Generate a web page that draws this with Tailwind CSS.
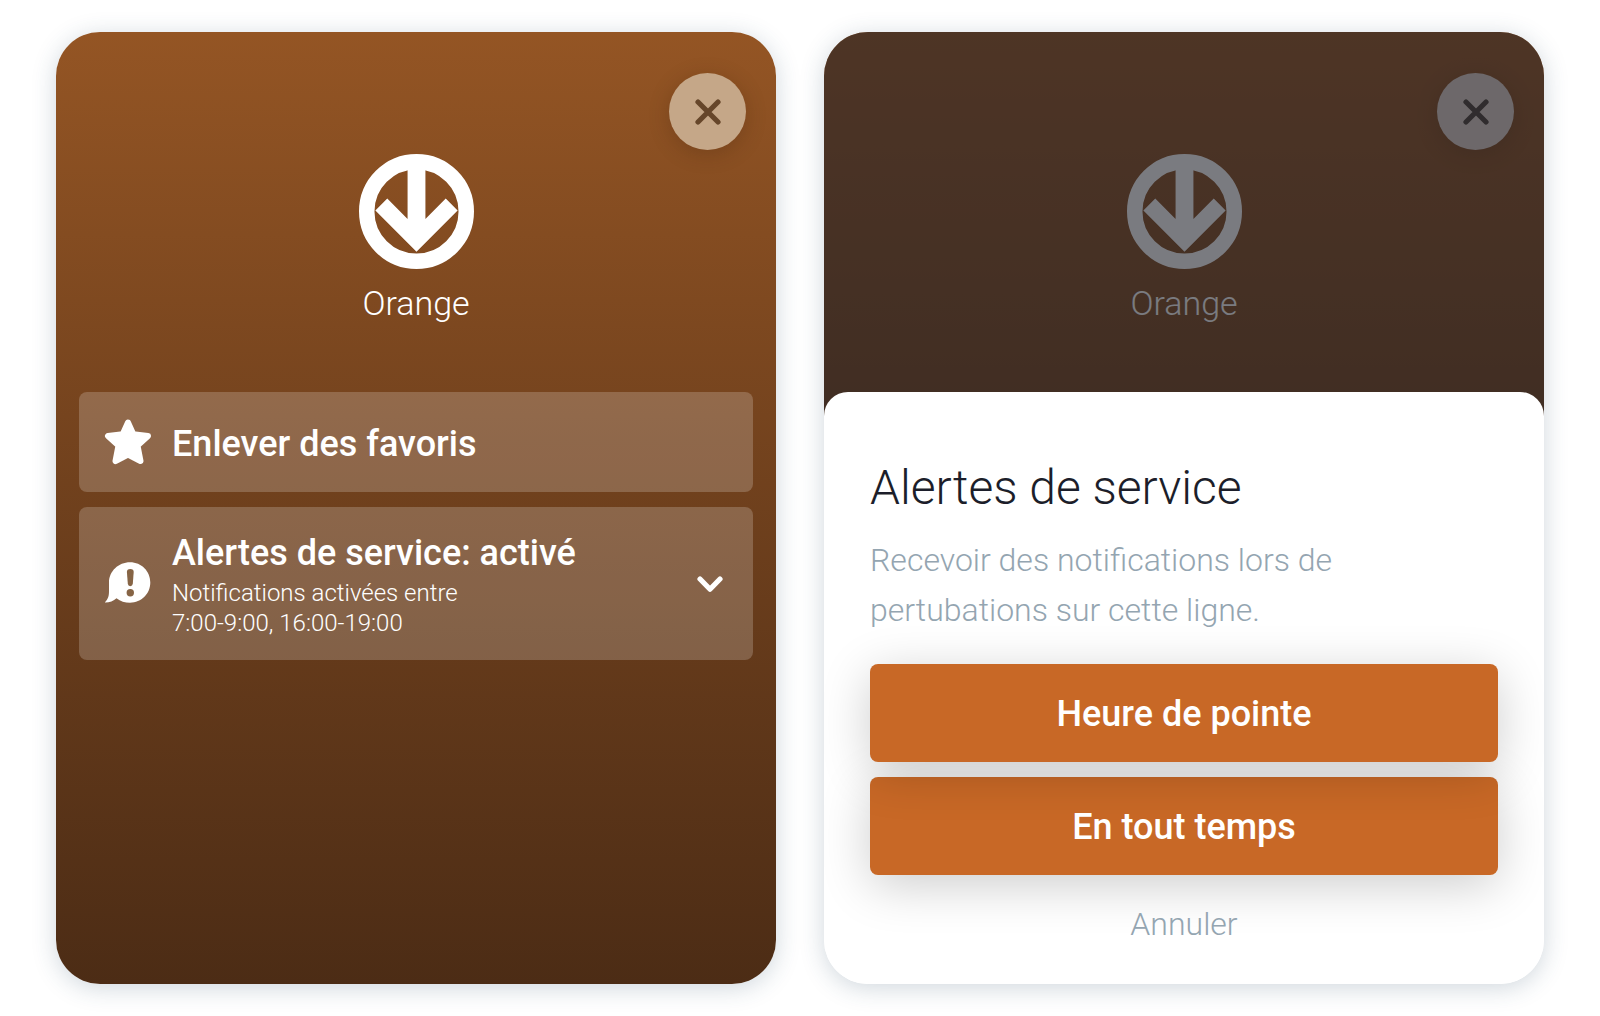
<!doctype html>
<html lang="fr">
<head>
  <meta charset="UTF-8">
  <meta name="viewport" content="width=device-width, initial-scale=1.0">
  <title>Orange</title>
  <script src="https://cdn.jsdelivr.net/npm/@tailwindcss/browser@4"></script>
</head>
<body class="bg-white font-['Roboto',sans-serif]">
  <main class="min-h-screen grid grid-cols-2 gap-12 px-14 py-8">

    <!-- Line options -->
    <section class="flex flex-col overflow-hidden rounded-[44px] bg-linear-to-b from-[#945524] to-[#4c2c15] shadow-[0_4px_24px_rgba(40,75,100,0.22)]">
      <header class="flex flex-col items-center pt-[41px] text-white">
        <button aria-label="Fermer" class="self-end mr-[30px] size-[77px] rounded-full bg-[#c5a788] text-[#66462a] flex items-center justify-center shadow-[0_4px_20px_rgba(60,30,10,0.25)]">
          <svg class="size-[26px]" viewBox="0 0 26 26" fill="none" stroke="currentColor" stroke-width="5.2" stroke-linecap="round"><path d="M3 3l20 20M23 3L3 23"/></svg>
        </button>
        <svg class="mt-1 size-[115px]" viewBox="0 0 116 116" fill="currentColor">
          <circle cx="58" cy="58" r="50.2" fill="none" stroke="currentColor" stroke-width="15.6"/>
          <path d="M49 8h18v57.5L87.5 45l12 12L58 98.5 16.5 57l12-12L49 65.5z"/>
        </svg>
        <h1 class="mt-[14px] text-[34px] leading-10 font-light">Orange</h1>
      </header>
      <div class="mt-[69px] px-[23px] flex flex-col gap-[15px] text-white">
        <button class="h-[100px] rounded-lg bg-white/20 px-[25px] flex items-center gap-5 text-left">
          <svg class="size-12 shrink-0" viewBox="0 0 48 48" fill="currentColor" stroke="currentColor" stroke-width="6" stroke-linejoin="round"><path d="M24 4.5L29.3 16.2L44 18L33.5 27.5L36.5 43L24 36.5L11.5 43L14.5 27.5L4 18L18.7 16.2z"/></svg>
          <span class="pt-1 text-[36px] leading-10 font-medium">Enlever des favoris</span>
        </button>
        <button class="h-[153px] rounded-lg bg-white/20 pl-[25px] pr-[30px] flex items-center gap-5 text-left">
          <svg class="size-12 shrink-0" viewBox="0 1.5 48 48">
            <path fill="#fff" d="M26 3.8C37.5 3.8 46.3 12.8 46.3 24S37.500 44.2 26 44.2C20.8 44.2 16.500 42.800 12.500 39.700C9.500 42.500 5 44.200.8 44C4.500 40 5 37 5 32V24C5 12.800 14.500 3.800 26 3.800z"/>
            <path fill="#866445" d="M22.9 13.5Q22.800 10.400 26.300 10.400T29.700 13.500L28.800 25.300Q28.500 27.700 26.300 27.700T23.800 25.300z"/>
            <circle fill="#866445" cx="26.300" cy="34.200" r="3.700"/>
          </svg>
          <span class="grow flex flex-col gap-0.5">
            <span class="text-[36px] leading-[46px] font-medium">Alertes de service: activé</span>
            <span class="text-[24px] leading-[30px] font-light">Notifications activées entre<br>7:00-9:00, 16:00-19:00</span>
          </span>
          <svg class="size-[26px] shrink-0" viewBox="0 0 26 26" fill="none" stroke="currentColor" stroke-width="5.2" stroke-linecap="round" stroke-linejoin="round"><path d="M3 8l10 10.200L23 8"/></svg>
        </button>
      </div>
    </section>

    <!-- Same screen with the alerts sheet open -->
    <section class="flex flex-col overflow-hidden rounded-[44px] bg-white shadow-[0_4px_24px_rgba(40,75,100,0.22)]">
      <header class="relative grow flex flex-col items-center pt-[41px] text-white bg-linear-to-b from-[#945524] to-[#74441e]">
        <button aria-label="Fermer" class="self-end mr-[30px] size-[77px] rounded-full bg-[#e0d2ca] text-[#4b4138] flex items-center justify-center shadow-[0_4px_20px_rgba(60,30,10,0.25)]">
          <svg class="size-[26px]" viewBox="0 0 26 26" fill="none" stroke="currentColor" stroke-width="5.2" stroke-linecap="round"><path d="M3 3l20 20M23 3L3 23"/></svg>
        </button>
        <svg class="mt-1 size-[115px]" viewBox="0 0 116 116" fill="currentColor">
          <circle cx="58" cy="58" r="50.2" fill="none" stroke="currentColor" stroke-width="15.6"/>
          <path d="M49 8h18v57.5L87.5 45l12 12L58 98.5 16.5 57l12-12L49 65.5z"/>
        </svg>
        <h1 class="mt-[14px] text-[34px] leading-10 font-light">Orange</h1>
        <div class="absolute inset-0 bg-[#1d1e27]/59"></div>
      </header>
      <div role="dialog" aria-labelledby="sheet-title" class="relative -mt-6 rounded-t-3xl bg-white px-[46px] pt-[68px] pb-[11px]">
        <h2 id="sheet-title" class="text-[48px] leading-14 font-light text-[#1c1e2a]">Alertes de service</h2>
        <p class="mt-[19px] text-[32px] leading-[50px] font-light text-[#94a5b1]">Recevoir des notifications lors de<br>pertubations sur cette ligne.</p>
        <div class="mt-[29px] flex flex-col gap-[15px] text-[36px] font-medium text-white">
          <button class="relative z-10 h-[98px] pt-0.5 rounded-lg bg-[#c86826] shadow-[0_10px_50px_rgba(0,0,0,0.2)]">Heure de pointe</button>
          <button class="h-[98px] pt-0.5 rounded-lg bg-[#c86826] shadow-[0_10px_50px_rgba(0,0,0,0.2)]">En tout temps</button>
        </div>
        <button class="relative z-10 w-full h-[98px] text-[32px] font-light text-[#94a5b1]">Annuler</button>
      </div>
    </section>

  </main>
</body>
</html>
